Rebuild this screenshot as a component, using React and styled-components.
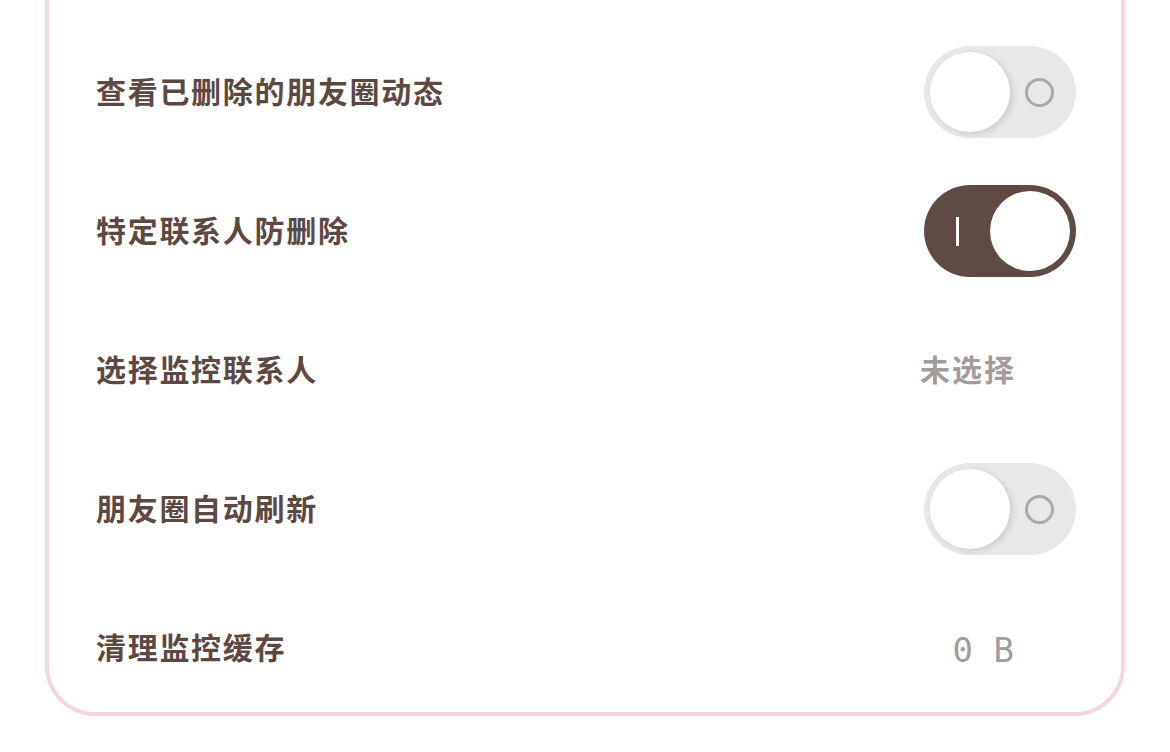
import React from "react";
import styled, { createGlobalStyle } from "styled-components";

const Global = createGlobalStyle`
  html, body { margin: 0; padding: 0; background: #ffffff; }
  body { font-family: "Noto Sans CJK SC", "Noto Sans", sans-serif; }
`;

const Page = styled.div`
  width: 1170px;
  height: 752px;
  overflow: hidden;
  padding: 0 45px;
  box-sizing: border-box;
  background: #fff;
`;

const Card = styled.div`
  background: #fff;
  border: 4px solid #f4d6e0;
  border-top: none;
  border-radius: 0 0 50px 50px;
  padding: 28px 45px 0 47px;
  display: flex;
  flex-direction: column;
  gap: 11px;
  box-sizing: border-box;
  height: 716px;
`;

const Row = styled.div`
  height: 128px;
  display: flex;
  align-items: center;
  justify-content: space-between;
`;

const Label = styled.div`
  font-size: 30px;
  line-height: 40px;
  font-weight: 700;
  color: #5c4943;
  letter-spacing: 1.7px;
  padding-bottom: 5px;
`;

const Value = styled.div`
  font-size: ${(p) => (p.$mono ? "34px" : "30px")};
  line-height: 40px;
  font-weight: ${(p) => (p.$mono ? 500 : 700)};
  color: #a29d9b;
  letter-spacing: ${(p) => (p.$mono ? "0" : "2px")};
  margin-right: ${(p) => (p.$mono ? "62px" : "60px")};
  padding: ${(p) => (p.$mono ? "4px 0 0" : "0 0 5px")};
  font-family: ${(p) =>
    p.$mono ? '"DejaVu Sans Mono", "Liberation Mono", monospace' : "inherit"};
`;

const Track = styled.div`
  position: relative;
  width: 152px;
  height: 92px;
  border-radius: 46px;
  background: ${(p) => (p.$on ? "#5e4b44" : "#e8e8e8")};
  flex-shrink: 0;
`;

const Knob = styled.div`
  position: absolute;
  top: 6px;
  left: ${(p) => (p.$on ? "66px" : "6px")};
  width: 80px;
  height: 80px;
  border-radius: 50%;
  background: #fff;
  box-shadow: ${(p) => (p.$on ? "none" : "3px 2px 6px rgba(0,0,0,0.12)")};
`;

const Ring = styled.div`
  position: absolute;
  top: 32px;
  left: 101px;
  width: 23px;
  height: 23px;
  border-radius: 50%;
  border: 3px solid #a9a9a9;
`;

const Bar = styled.div`
  position: absolute;
  left: 32px;
  top: 32px;
  width: 3px;
  height: 29px;
  background: #fff;
`;

function Toggle({ on }) {
  return (
    <Track $on={on}>
      {on ? <Bar /> : <Ring />}
      <Knob $on={on} />
    </Track>
  );
}

export default function App() {
  return (
    <>
      <Global />
      <Page>
        <Card>
          <Row>
            <Label>查看已删除的朋友圈动态</Label>
            <Toggle on={false} />
          </Row>
          <Row>
            <Label>特定联系人防删除</Label>
            <Toggle on={true} />
          </Row>
          <Row>
            <Label>选择监控联系人</Label>
            <Value>未选择</Value>
          </Row>
          <Row>
            <Label>朋友圈自动刷新</Label>
            <Toggle on={false} />
          </Row>
          <Row>
            <Label>清理监控缓存</Label>
            <Value $mono>0 B</Value>
          </Row>
        </Card>
      </Page>
    </>
  );
}
